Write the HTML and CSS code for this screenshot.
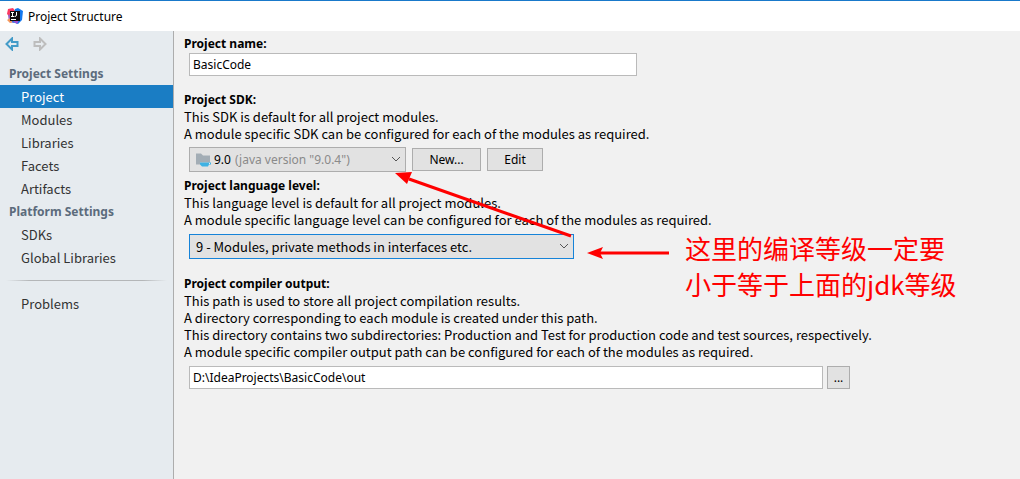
FILE: index.html
```html
<!DOCTYPE html>
<html lang="en">
<head>
<meta charset="utf-8">
<title>Project Structure</title>
<link rel="stylesheet" href="styles.css">
</head>
<body>
<div class="window">
  <header class="titlebar">
    <svg class="logo" viewBox="0 0 16 16" aria-hidden="true">
      <path d="M1 1 6 0 9 4 3 9 0 6z" fill="#fb3a62"/>
      <path d="M1 7 5 6 7 15 2 14z" fill="#9a5fc0"/>
      <path d="M0 12 5 9 8 13 3 15z" fill="#f5975a"/>
      <path d="M8 1 11 0 16 3 15 12 11 16 5 14z" fill="#1478ee"/>
      <path d="M6 13 12 12 10 16z" fill="#a54fd0"/>
      <path d="M3 3h10v10H3z" fill="#100b12"/>
      <path d="M4 4.500h3M5.500 4.500v3.500M4 8.500h3M9.500 4v3q0 1.500-2 1.500M4 11.500h5" fill="none" stroke="#fff"/>
    </svg>
    <span>Project Structure</span>
  </header>
  <div class="body">
    <aside class="sidebar">
      <div class="history">
        <button class="nav-btn back" aria-label="Back"><svg viewBox="0 0 14 14"><path d="M7 1.500 1.500 7 7 12.500V9h5.500V5H7z"/></svg></button>
        <button class="nav-btn forward" aria-label="Forward"><svg viewBox="0 0 14 14"><path d="M7 1.500 12.500 7 7 12.500V9H1.500V5H7z"/></svg></button>
      </div>
      <nav class="menu">
        <h2>Project Settings</h2>
        <a href="#project" class="active">Project</a>
        <a href="#modules">Modules</a>
        <a href="#libraries">Libraries</a>
        <a href="#facets">Facets</a>
        <a href="#artifacts">Artifacts</a>
        <h2>Platform Settings</h2>
        <a href="#sdks">SDKs</a>
        <a href="#global">Global Libraries</a>
        <div class="separator"></div>
        <a href="#problems">Problems</a>
      </nav>
    </aside>
    <main class="content">
      <section class="group name-group">
        <label class="heading" for="name">Project name:</label>
        <input class="field name-field" id="name" type="text" value="BasicCode">
      </section>
      <section class="group">
        <label class="heading" for="sdk">Project SDK:</label>
        <p>This SDK is default for all project modules.<br>A module specific SDK can be configured for each of the modules as required.</p>
        <div class="controls">
          <div class="combo sdk-combo">
            <select id="sdk"><option>(java version "9.0.4")</option></select>
            <span class="sdk-label">
              <svg class="folder" viewBox="0 0 16 16" aria-hidden="true"><path d="M1 2h5l2 2h7v7H5v2H1z" fill="#a3adb5"/><path d="M5 11h11v2h-2l-1 2H7l-2-2z" fill="#3fb2e3"/><path d="M14 12h1" stroke="#dff2fa"/></svg>
              <span>9.0</span>
            </span>
            <svg class="chevron" viewBox="0 0 10 6" aria-hidden="true"><path d="M1 1l4 4 4-4"/></svg>
          </div>
          <button class="btn new-btn">New...</button>
          <button class="btn edit-btn">Edit</button>
        </div>
      </section>
      <section class="group level-group">
        <label class="heading" for="level">Project language level:</label>
        <p>This language level is default for all project modules.<br>A module specific language level can be configured for each of the modules as required.</p>
        <div class="combo level-combo">
          <select id="level"><option>9 - Modules, private methods in interfaces etc.</option></select>
          <svg class="chevron" viewBox="0 0 10 6" aria-hidden="true"><path d="M1 1l4 4 4-4"/></svg>
        </div>
      </section>
      <section class="group output-group">
        <label class="heading" for="output">Project compiler output:</label>
        <p>This path is used to store all project compilation results.<br>A directory corresponding to each module is created under this path.<br>This directory contains two subdirectories: Production and Test for production code and test sources, respectively.<br>A module specific compiler output path can be configured for each of the modules as required.</p>
        <div class="output-row">
          <input class="field" id="output" type="text" value="D:\IdeaProjects\BasicCode\out">
          <button class="btn browse-btn" aria-label="Browse">...</button>
        </div>
      </section>
      <svg class="arrows" viewBox="0 0 280 90" aria-hidden="true">
        <path d="M176 65 14 8M274 82H205" fill="none" stroke="#f00" stroke-width="3"/>
        <path d="M0 2 17 1 14 8 12 13z" fill="#f00"/>
        <path d="M192 82 208 76 205 82 208 88z" fill="#f00"/>
      </svg>
      <p class="note" lang="zh-CN">这里的编译等级一定要<br>小于等于上面的jdk等级</p>
    </main>
  </div>
</div>
</body>
</html>
```
FILE: styles.css
```css
* { box-sizing: border-box; }
body {
  margin: 0;
  font: 12px/17px "Noto Sans", "Open Sans", sans-serif;
  color: #000;
  background: #f1f1f1;
}
button, input, select { font: inherit; color: inherit; margin: 0; }
h2, p { margin: 0; }
.window { min-height: 100vh; display: flex; flex-direction: column; }
.titlebar {
  height: 31px;
  display: flex;
  align-items: center;
  gap: 5px;
  padding-left: 7px;
  border-top: 1px solid #1979ca;
  background: #fff;
}
.logo { width: 16px; height: 16px; }
.body { flex: 1; display: flex; }
.sidebar {
  flex: 0 0 174px;
  border-right: 1px solid #adadad;
  background: #e6ebef;
}
.history { display: flex; gap: 14px; padding: 6px 5px 11px; }
.nav-btn { display: flex; padding: 0; border: 0; background: none; }
.nav-btn svg { width: 14px; height: 14px; fill: none; stroke-width: 2; }
.back { color: #439bc8; }
.forward { color: #bdbdbd; }
.nav-btn path { stroke: currentColor; }
.menu { line-height: 23px; }
.menu h2 { padding-left: 9px; font-size: 12px; color: #5c6b7c; }
.menu a { display: block; padding-left: 21px; color: #333; text-decoration: none; }
.menu a, .group p, .level-combo select {
  font-family: "Noto Sans CJK SC", "Noto Sans", sans-serif;
  font-size: 13px;
}
.menu .active { background: #1a7dc4; color: #fff; }
.separator {
  height: 1px;
  margin: 11px 6px;
  background: linear-gradient(90deg, transparent, #b4b6b8 15%, #b4b6b8 85%, transparent);
}
.content { position: relative; flex: 1; min-width: 0; padding: 4px 10px; }
.group { margin-bottom: 5px; }
.name-group { margin-bottom: 15px; }
.level-group { margin-bottom: 16px; }
.heading { display: block; font-weight: 700; }
.group p { margin-bottom: 5px; }
.level-group p, .output-group p { margin-bottom: 6px; }
.field {
  display: block;
  width: 100%;
  height: 23px;
  padding: 0 3px;
  border: 1px solid #bababa;
  background: #fff;
}
.name-field { max-width: 448px; margin: 1px 0 0 5px; }
.controls { display: flex; gap: 6px; margin-left: 5px; align-items: center; }
.combo { position: relative; }
.combo select {
  appearance: none;
  display: block;
  width: 100%;
  height: 25px;
  padding: 0 24px 0 6px;
  border: 1px solid #adadad;
  border-radius: 0;
  background: #e2e2e2;
}
.sdk-combo { width: 217px; }
.sdk-combo select { padding-left: 45px; color: #8a8a8a; }
.sdk-label {
  position: absolute;
  left: 6px;
  top: 4px;
  display: flex;
  gap: 3px;
  pointer-events: none;
}
.folder { width: 16px; height: 17px; }
.chevron {
  position: absolute;
  right: 5px;
  top: 9px;
  width: 10px;
  height: 6px;
  fill: none;
  stroke: #555;
  pointer-events: none;
}
.level-combo { max-width: 385px; margin-left: 5px; }
.level-combo select { border: 1px solid #1683d8; }
.btn { height: 23px; padding: 0; border: 1px solid #adadad; background: #e2e2e2; }
.new-btn { width: 69px; }
.edit-btn { width: 56px; }
.output-row { display: flex; gap: 4px; max-width: 661px; margin-left: 5px; }
.browse-btn { flex: 0 0 23px; line-height: 15px; }
.arrows { position: absolute; left: 221px; top: 140px; width: 280px; height: 90px; pointer-events: none; }
.note {
  position: absolute;
  left: 511px;
  top: 199px;
  font: 26px/36px "Noto Sans CJK SC", sans-serif;
  color: #f00;
  white-space: nowrap;
}
```
